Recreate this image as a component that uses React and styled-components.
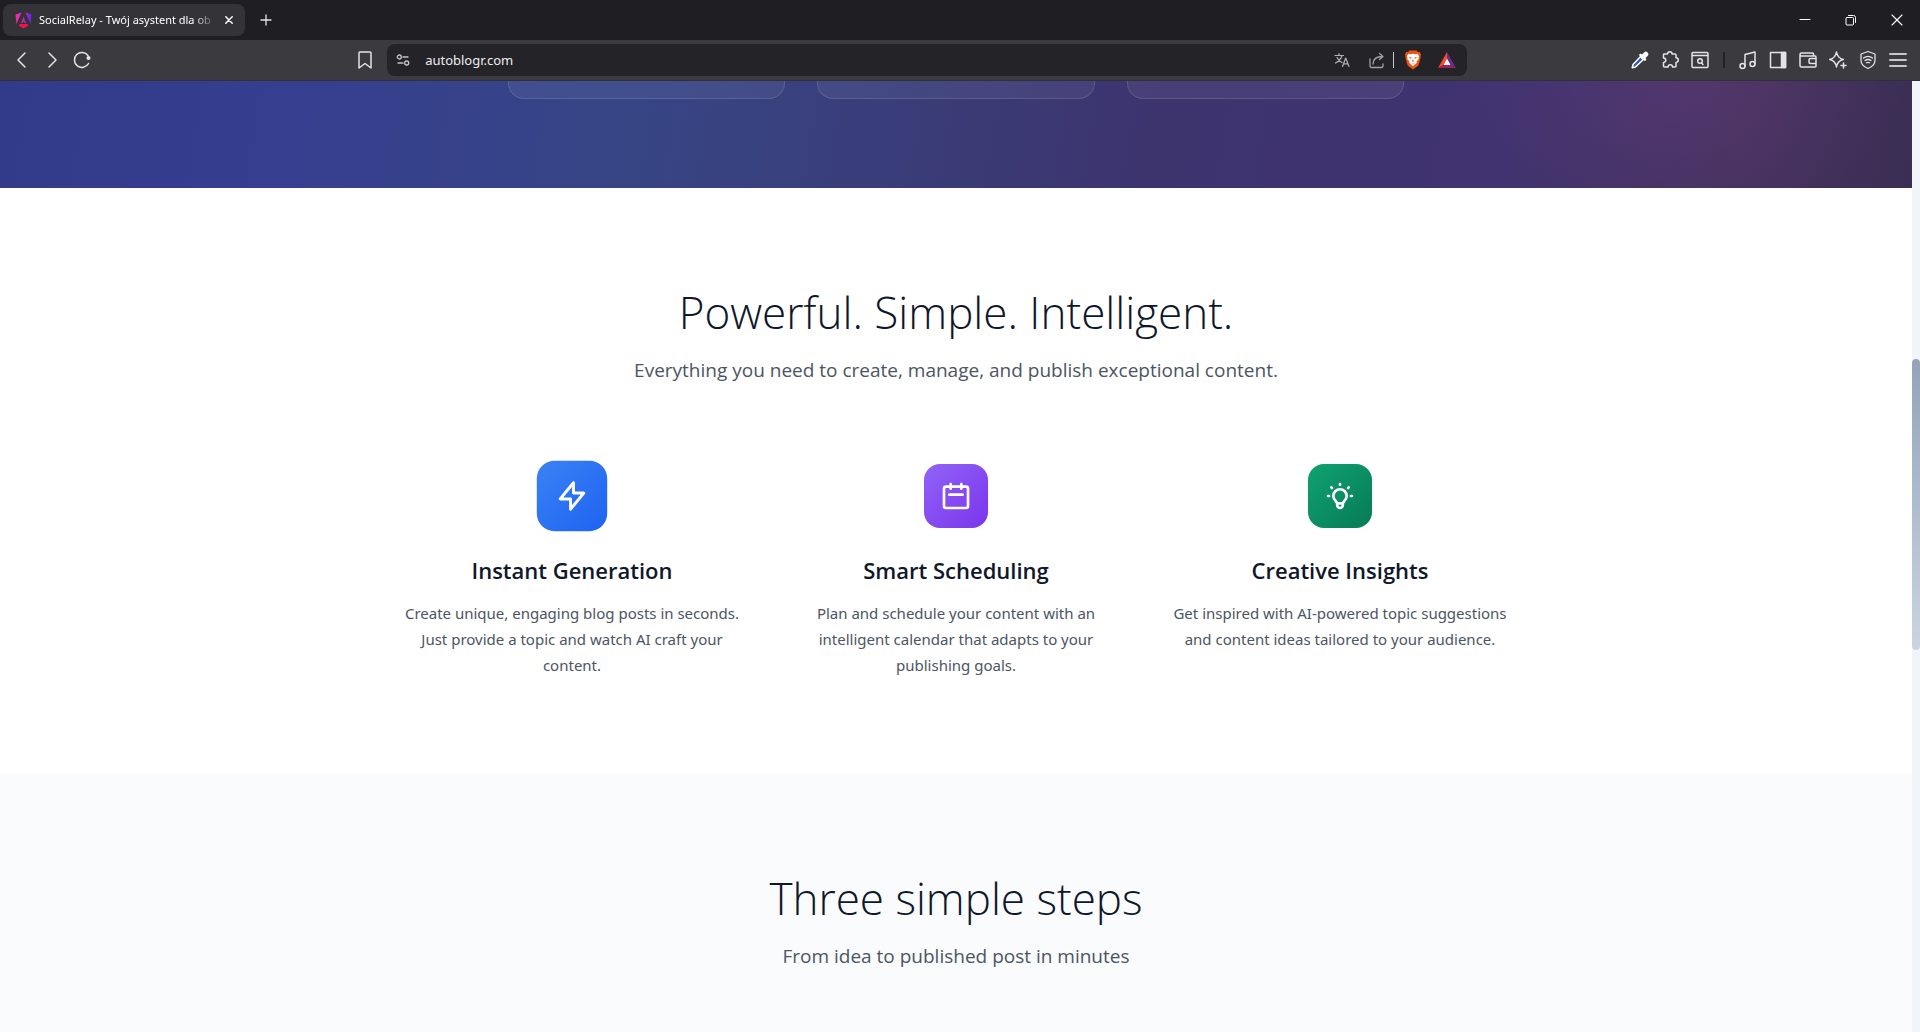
import styled, { createGlobalStyle } from "styled-components";

const GlobalStyle = createGlobalStyle`
  * {
    box-sizing: border-box;
  }
  body {
    margin: 0;
    font-family: "Open Sans", "Noto Sans", sans-serif;
    background-color: white;
  }
  h2, h3, p {
    margin: 0;
  }
`;

const Window = styled.div`
  display: flex;
  flex-direction: column;
  height: 100vh;
  overflow: hidden;
`;

const TabStrip = styled.div`
  display: flex;
  align-items: center;
  flex: none;
  height: 40px;
  padding-left: 3px;
  background-color: #1f1e23;
`;

const Tab = styled.div`
  display: flex;
  align-items: center;
  width: 242px;
  height: 32px;
  padding: 0 8px 0 12px;
  border-radius: 8px;
  background-color: #343438;
`;

const TabTitle = styled.span`
  flex: 1;
  margin: 0 4px 0 7px;
  font-family: "Noto Sans", sans-serif;
  font-size: 11px;
  line-height: 20px;
  color: white;
  white-space: nowrap;
  overflow: hidden;
  mask-image: linear-gradient(to right, black 86%, transparent);
`;

const IconButton = styled.button`
  display: flex;
  align-items: center;
  justify-content: center;
  flex: none;
  width: ${(props) => props.$width || 30}px;
  height: ${(props) => props.$height || 30}px;
  padding: 0;
  border: none;
  background: none;
  color: ${(props) => props.$color || "#e4e4e8"};
`;

const WindowButtons = styled.div`
  display: flex;
  margin-left: auto;
`;

const Toolbar = styled.div`
  display: flex;
  align-items: center;
  flex: none;
  height: 41px;
  background-color: #3b3b3f;
  border-bottom: 1px solid #302f3c;
`;

const ToolbarSide = styled.div`
  display: flex;
  align-items: center;
  flex: ${(props) => props.$grow} 0 0;
  padding: 0 7px;
`;

const BookmarkButton = styled(IconButton)`
  margin-left: auto;
`;

const AddressBar = styled.div`
  display: flex;
  align-items: center;
  width: 1080px;
  height: 32px;
  border-radius: 8px;
  background-color: #242428;
`;

const AddressInput = styled.input`
  flex: 1;
  min-width: 0;
  padding: 0 6px;
  border: none;
  outline: none;
  background: none;
  font-family: "Noto Sans", sans-serif;
  font-size: 13px;
  color: #ececf0;
`;

const Divider = styled.span`
  width: ${(props) => props.$width}px;
  height: 16px;
  background-color: ${(props) => props.$color};
`;

const Extensions = styled.div`
  display: flex;
  align-items: center;
  margin-left: auto;
`;

const Viewport = styled.div`
  display: flex;
  flex: 1;
  min-height: 0;
`;

const Page = styled.main`
  display: flex;
  flex-direction: column;
  flex: 1;
  overflow: hidden;
`;

const Hero = styled.section`
  padding-bottom: 89px;
  background:
    radial-gradient(ellipse 220px 150px at 88% 0%, rgba(130, 70, 140, 0.22), transparent),
    linear-gradient(100deg, #323a8a 0%, #363f8f 16%, #374585 33%, #3a3b76 50%, #3d346e 60%, #403370 78%, #46325f 91%, #3a2e54 100%);
`;

const HeroCards = styled.div`
  display: grid;
  grid-template-columns: repeat(3, 1fr);
  gap: 32px;
  max-width: 896px;
  margin: 0 auto;
`;

const HeroCard = styled.div`
  height: 18px;
  border: 1px solid rgba(255, 255, 255, 0.12);
  border-top: none;
  border-radius: 0 0 16px 16px;
  background-color: rgba(255, 255, 255, 0.06);
`;

const Section = styled.section`
  flex: ${(props) => (props.$fill ? "1" : "none")};
  padding: 96px 24px;
  background-color: ${(props) => props.$bg};
  text-align: center;
`;

const Heading = styled.h2`
  font-size: 44px;
  font-weight: 300;
  line-height: 56px;
  color: #0f172a;
`;

const Subheading = styled.p`
  margin-top: 16px;
  font-size: 19px;
  line-height: 28px;
  color: #4b5563;
`;

const Features = styled.div`
  display: grid;
  grid-template-columns: repeat(3, 1fr);
  gap: 48px;
  max-width: 1104px;
  margin: 80px auto 0;
`;

const Feature = styled.article`
  display: flex;
  flex-direction: column;
  align-items: center;
`;

const FeatureIcon = styled.div`
  display: flex;
  align-items: center;
  justify-content: center;
  width: 64px;
  height: 64px;
  border-radius: 16px;
  background: linear-gradient(135deg, ${(props) => props.$from}, ${(props) => props.$to});
  color: white;
  transform: ${(props) => (props.$active ? "scale(1.1)" : "none")};
`;

const FeatureTitle = styled.h3`
  margin-top: 24px;
  font-size: 22px;
  font-weight: 600;
  line-height: 36px;
  color: #0f172a;
`;

const FeatureText = styled.p`
  margin-top: 12px;
  font-family: "Noto Sans", sans-serif;
  font-size: 15px;
  line-height: 26px;
  color: #4b5563;
`;

const ScrollTrack = styled.div`
  display: flex;
  flex-direction: column;
  width: 8px;
  background-color: #f1f5f9;
`;

const ScrollSpace = styled.div`
  flex: ${(props) => props.$size};
`;

const ScrollThumb = styled.div`
  flex: 291;
  border-radius: 4px;
  background: linear-gradient(to bottom, #94a3b8, #cbd5e1);
`;

const Svg = ({ size = 20, width = 1.5, children, box = 20 }) => (
  <svg
    width={size}
    height={size}
    viewBox={`0 0 ${box} ${box}`}
    fill="none"
    stroke="currentColor"
    strokeWidth={width}
    strokeLinecap="round"
    strokeLinejoin="round"
    aria-hidden="true"
  >
    {children}
  </svg>
);

const AngularLogo = () => (
  <svg width="17" height="17" viewBox="0 0 17 17" aria-hidden="true">
    <defs>
      <linearGradient id="ng" gradientUnits="userSpaceOnUse" x1="1" y1="0" x2="16" y2="0">
        <stop offset="0" stopColor="#f02a9e" />
        <stop offset="0.5" stopColor="#d52bd0" />
        <stop offset="1" stopColor="#6a1df0" />
      </linearGradient>
    </defs>
    <path d="M6.500.5.5 2.500l.9 9.500L6.500.5ZM10.500.5l6 2-.9 9.500L10.500.5Z" fill="url(#ng)" />
    <path d="M8.500 4.500 6 11h1.600l.5-1.300h1l.5 1.300H11L8.500 4.500Z" fill="#b52ba8" />
    <path d="M4.500 12h8l.7 1.800L8.500 16.500l-4.700-2.700L4.500 12Z" fill="#f0114f" />
  </svg>
);

const BraveLogo = () => (
  <svg width="18" height="20" viewBox="0 0 18 20" aria-hidden="true">
    <path d="M5.500.5h7l1.500 1.600 1.800-.2L17 4.500l-.5 1.700.2 1-2 7.300c-.3 1-.8 1.500-1.600 2.100L9 19.500l-4.100-2.900c-.8-.6-1.300-1.100-1.600-2.100l-2-7.300.2-1L1 4.500l1.200-2.600 1.800.2L5.500.5Z" fill="#f2520f" />
    <path d="m4.500 3.800 2.300.5L9 3.800l2.200.5 2.300-.5 1.700 2.500-.7 1.400.2 1.300-2.200 2.600.4 1.200-1.400 1.200L9 16.200l-2.500-2.200-1.400-1.200.4-1.200L3.300 9l.2-1.300-.7-1.400 1.700-2.500Z" fill="white" />
    <path d="m4.800 6.800 2.800.6-.8 1.500-2-2.100ZM13.200 6.800l-2.800.6.8 1.500 2-2.100ZM9 9l.8 2.300L9 12l-.8-.7L9 9ZM7 12.600l2 .8 2-.8-2 1.500-2-1.500Z" fill="#f2520f" />
  </svg>
);

const BatLogo = () => (
  <svg width="18" height="17" viewBox="0 0 18 17" aria-hidden="true">
    <path d="M9 0 0 16l5.500-3L9 6.500V0Z" fill="#ff4724" />
    <path d="M9 0v6.500l3.500 6.500 5.500 3L9 0Z" fill="#662d91" />
    <path d="m0 16 5.500-3h7l5.500 3H0Z" fill="#9e1f63" />
    <path d="M9 6.500 5.500 13h7L9 6.500Z" fill="white" />
  </svg>
);

const Pipette = () => (
  <svg width="18" height="18" viewBox="0 0 18 18" aria-hidden="true">
    <path d="m10.500 4.500-8.500 9-.8 3.300 3.300-.8 9-8.500-3-3Z" fill="#315bc0" stroke="white" strokeWidth="1.500" strokeLinejoin="round" />
    <path d="m9.500 4 4.500 4.500" stroke="white" strokeWidth="2.500" strokeLinecap="round" />
    <path d="m12 6 2.800-2.800" stroke="white" strokeWidth="5" strokeLinecap="round" />
  </svg>
);

const features = [
  {
    title: "Instant Generation",
    text: "Create unique, engaging blog posts in seconds. Just provide a topic and watch AI craft your content.",
    from: "#3b82f6",
    to: "#1d63f0",
    active: true,
    icon: <path d="M13 10V3L4 14h7v7l9-11h-7Z" />,
  },
  {
    title: "Smart Scheduling",
    text: "Plan and schedule your content with an intelligent calendar that adapts to your publishing goals.",
    from: "#9163f7",
    to: "#7a35ec",
    icon: <path d="M8 6.500V3M16 6.500V3M7 11h10M4.500 21h15a1.500 1.500 0 0 0 1.500-1.500v-13A1.500 1.500 0 0 0 19.500 5h-15A1.500 1.500 0 0 0 3 6.500v13A1.500 1.500 0 0 0 4.500 21Z" />,
  },
  {
    title: "Creative Insights",
    text: "Get inspired with AI-powered topic suggestions and content ideas tailored to your audience.",
    from: "#0fa271",
    to: "#077a56",
    icon: <path d="M12 3v.5M5.500 5.500l.5.500M18.500 5.500l-.5.500M3 12h.8M20.200 12h.8M9.900 17.500 8.600 15.600a5 5 0 1 1 6.800 0l-1.300 1.900M9.900 17.500h4.200v1.400a2.100 2.100 0 0 1-4.200 0v-1.400Z" />,
  },
];

const App = () => {
  return (
    <>
      <GlobalStyle />
      <Window>
        <TabStrip>
          <Tab>
            <AngularLogo />
            <TabTitle>SocialRelay - Twój asystent dla ob</TabTitle>
            <IconButton $width={16} $height={24} $color="white" aria-label="Close tab">
              <Svg size={8} box={8}>
                <path d="m.8.8 6.400 6.400M7.200.8.8 7.200" />
              </Svg>
            </IconButton>
          </Tab>
          <IconButton $width={42} aria-label="New tab">
            <Svg size={12} box={12} width={1.3}>
              <path d="M6 1v10M1 6h10" />
            </Svg>
          </IconButton>
          <WindowButtons>
            <IconButton $width={46} $color="white" aria-label="Minimize">
              <Svg size={12} box={12} width={1}>
                <path d="M1 5.500h10" />
              </Svg>
            </IconButton>
            <IconButton $width={46} $color="white" aria-label="Restore">
              <Svg size={12} box={12} width={1}>
                <path d="M2 3.500h5.500a1 1 0 0 1 1 1V10a1 1 0 0 1-1 1H2a1 1 0 0 1-1-1V4.500a1 1 0 0 1 1-1ZM3.500 1.500h5a2 2 0 0 1 2 2v5" />
              </Svg>
            </IconButton>
            <IconButton $width={46} $color="white" aria-label="Close window">
              <Svg size={12} box={12} width={1.1}>
                <path d="m1 1 10 10M11 1 1 11" />
              </Svg>
            </IconButton>
          </WindowButtons>
        </TabStrip>

        <Toolbar>
          <ToolbarSide $grow={386}>
            <IconButton aria-label="Back">
              <Svg>
                <path d="m13 3-7 7 7 7" />
              </Svg>
            </IconButton>
            <IconButton aria-label="Forward">
              <Svg>
                <path d="m7 3 7 7-7 7" />
              </Svg>
            </IconButton>
            <IconButton aria-label="Reload">
              <Svg>
                <path d="M16.500 13.500A7.500 7.500 0 1 1 16 5.500" />
                <circle cx="16.500" cy="8" r="1.300" fill="currentColor" />
              </Svg>
            </IconButton>
            <BookmarkButton aria-label="Bookmark">
              <Svg>
                <path d="M5 2h10a1 1 0 0 1 1 1v15l-6-4.500L4 18V3a1 1 0 0 1 1-1Z" />
              </Svg>
            </BookmarkButton>
          </ToolbarSide>
          <AddressBar>
            <IconButton $width={32} $color="#c4c4ca" aria-label="Site information">
              <Svg size={14} box={14} width={1.3}>
                <circle cx="3.300" cy="4" r="2" />
                <circle cx="10.700" cy="10" r="2" />
                <path d="M7 4h5M2 10h5" />
              </Svg>
            </IconButton>
            <AddressInput aria-label="Address" defaultValue="autoblogr.com" />
            <IconButton $width={34} $color="#b0b0b6" aria-label="Translate">
              <Svg size={16} box={16} width={1.2}>
                <path d="M1 3.500h8.500M5 1.500v2M8 3.500C7 7 4.500 9.500 1.500 11M3 5.500c1 2.200 2.700 3.800 5 5M8.500 14.500l3.200-8.500 3.300 8.500M9.600 11.800h4.300" />
              </Svg>
            </IconButton>
            <IconButton $width={34} $color="#a0a0a6" aria-label="Share">
              <Svg size={17} box={17} width={1.3}>
                <path d="M2 7v7a1.500 1.500 0 0 0 1.500 1.500h10A1.500 1.500 0 0 0 15 14v-2M5 12c0-5 3.500-7.500 9.500-7.500M11.500 1.500l3.500 3-3.500 3" />
              </Svg>
            </IconButton>
            <Divider $width={1} $color="#c6c6cb" />
            <IconButton $width={37} aria-label="Brave Shields">
              <BraveLogo />
            </IconButton>
            <IconButton $width={31} aria-label="Rewards">
              <BatLogo />
            </IconButton>
            <Divider $width={5} $color="transparent" />
          </AddressBar>
          <ToolbarSide $grow={454}>
            <Extensions>
              <IconButton aria-label="Color picker">
                <Pipette />
              </IconButton>
              <IconButton aria-label="Extensions">
                <Svg>
                  <path d="M4 4h3.500a2.300 2.300 0 0 1 4.600 0H15a1 1 0 0 1 1 1v2.800a2.300 2.300 0 0 1 0 4.600V16a1 1 0 0 1-1 1h-2.500a2.200 2.200 0 0 0-4.400 0H4.500a1 1 0 0 1-1-1v-3.500a2.300 2.300 0 0 0 0-4.600V5A1 1 0 0 1 4 4Z" />
                </Svg>
              </IconButton>
              <IconButton aria-label="Search tabs">
                <Svg>
                  <path d="M3 2.500h14a1 1 0 0 1 1 1v13a1 1 0 0 1-1 1H3a1 1 0 0 1-1-1v-13a1 1 0 0 1 1-1ZM2 5.500h16M11.500 13l1.500 1.500" />
                  <circle cx="10" cy="11" r="2.300" />
                </Svg>
              </IconButton>
              <IconButton as="span" $width={18}>
                <Divider $width={2} $color="#222226" />
              </IconButton>
              <IconButton aria-label="Media">
                <Svg>
                  <circle cx="4.500" cy="16" r="2.500" />
                  <circle cx="14.500" cy="14" r="2.500" />
                  <path d="M7 16V4.500L17 2v12" />
                </Svg>
              </IconButton>
              <IconButton aria-label="Sidebar">
                <Svg>
                  <path d="M2.500 2.500h15v15h-15z" />
                  <path d="M13.500 2.500h4v15h-4z" fill="currentColor" />
                </Svg>
              </IconButton>
              <IconButton aria-label="Wallet">
                <Svg>
                  <path d="M15.500 6V4a1 1 0 0 0-1-1H3.500a1.500 1.500 0 0 0 0 3H17a1 1 0 0 1 1 1v9a1 1 0 0 1-1 1H3.500A1.500 1.500 0 0 1 2 15.500v-11M18 8.500h-5.500a1.500 1.500 0 0 0-1.500 1.500v2a1.500 1.500 0 0 0 1.500 1.500H18" />
                </Svg>
              </IconButton>
              <IconButton aria-label="Leo AI">
                <Svg>
                  <path d="M8.500 2c.7 4.300 2.200 6.300 6.800 7.500-4.600 1-6.100 3.200-6.800 7.500-.7-4.300-2.200-6.500-6.800-7.500C6.300 8.300 7.800 6.300 8.500 2ZM15.500 13v5M13 15.500h5" />
                </Svg>
              </IconButton>
              <IconButton aria-label="VPN">
                <Svg width={1.3}>
                  <path d="m10 1.500 7 2.500v6c0 4-3 7-7 8.500-4-1.500-7-4.500-7-8.500V4l7-2.500ZM5.500 8c2.700-2 6.300-2 9 0M7 10.500c2-1.300 4-1.300 6 0M8.500 12.800c1-.6 2-.6 3 0" />
                </Svg>
              </IconButton>
              <IconButton $color="#c8c8cc" aria-label="Menu">
                <Svg width={1.8}>
                  <path d="M2 4h16M2 10h16M2 16h16" />
                </Svg>
              </IconButton>
            </Extensions>
          </ToolbarSide>
        </Toolbar>

        <Viewport>
          <Page>
            <Hero>
              <HeroCards>
                <HeroCard />
                <HeroCard />
                <HeroCard />
              </HeroCards>
            </Hero>
            <Section $bg="white">
              <Heading>Powerful. Simple. Intelligent.</Heading>
              <Subheading>Everything you need to create, manage, and publish exceptional content.</Subheading>
              <Features>
                {features.map((feature) => (
                  <Feature key={feature.title}>
                    <FeatureIcon $from={feature.from} $to={feature.to} $active={feature.active}>
                      <Svg size={32} box={24} width={2}>
                        {feature.icon}
                      </Svg>
                    </FeatureIcon>
                    <FeatureTitle>{feature.title}</FeatureTitle>
                    <FeatureText>{feature.text}</FeatureText>
                  </Feature>
                ))}
              </Features>
            </Section>
            <Section $bg="#fafbfd" $fill>
              <Heading>Three simple steps</Heading>
              <Subheading>From idea to published post in minutes</Subheading>
            </Section>
          </Page>
          <ScrollTrack>
            <ScrollSpace $size={278} />
            <ScrollThumb />
            <ScrollSpace $size={382} />
          </ScrollTrack>
        </Viewport>
      </Window>
    </>
  );
};

export default App;
